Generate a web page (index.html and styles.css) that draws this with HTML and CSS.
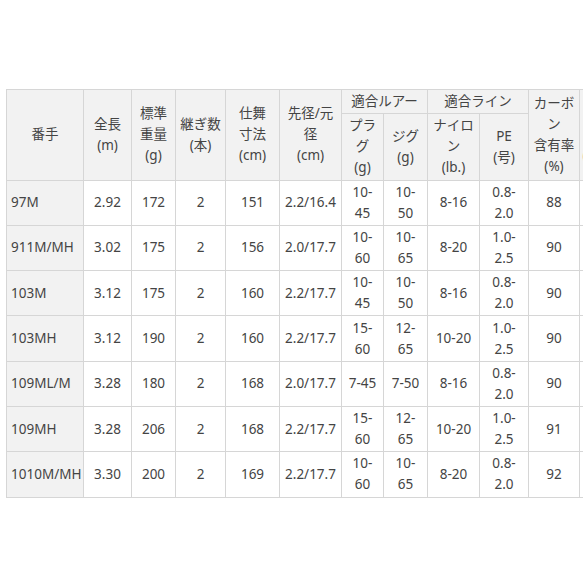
FILE: index.html
```html
<!DOCTYPE html>
<html lang="ja">
<head>
<meta charset="utf-8">
<title>スペック</title>
<link rel="stylesheet" href="styles.css">
</head>
<body>
<div class="wrap">
<table class="spec">
  <colgroup>
    <col class="c-name"><col class="c-len"><col class="c-wt"><col class="c-pc"><col class="c-close"><col class="c-dia">
    <col class="c-plug"><col class="c-jig"><col class="c-nylon"><col class="c-pe"><col class="c-carbon"><col class="c-price">
  </colgroup>
  <thead>
    <tr>
      <th rowspan="2">番手</th>
      <th rowspan="2">全長<br>(m)</th>
      <th rowspan="2">標準<br>重量<br>(g)</th>
      <th rowspan="2">継ぎ数<br>(本)</th>
      <th rowspan="2">仕舞<br>寸法<br>(cm)</th>
      <th rowspan="2">先径/元<br>径<br>(cm)</th>
      <th colspan="2">適合ルアー</th>
      <th colspan="2">適合ライン</th>
      <th rowspan="2">カーボ<br>ン<br>含有率<br>(%)</th>
      <th rowspan="2">本体<br>価格<br>(円・税抜)</th>
    </tr>
    <tr>
      <th>プラ<br>グ<br>(g)</th>
      <th>ジグ<br>(g)</th>
      <th>ナイロ<br>ン<br>(lb.)</th>
      <th>PE<br>(号)</th>
    </tr>
  </thead>
  <tbody>
    <tr><td class="name">97M</td><td>2.92</td><td>172</td><td>2</td><td>151</td><td>2.2/16.4</td><td>10-<br>45</td><td>10-<br>50</td><td>8-16</td><td>0.8-<br>2.0</td><td>88</td><td></td></tr>
    <tr><td class="name">911M/MH</td><td>3.02</td><td>175</td><td>2</td><td>156</td><td>2.0/17.7</td><td>10-<br>60</td><td>10-<br>65</td><td>8-20</td><td>1.0-<br>2.5</td><td>90</td><td></td></tr>
    <tr><td class="name">103M</td><td>3.12</td><td>175</td><td>2</td><td>160</td><td>2.2/17.7</td><td>10-<br>45</td><td>10-<br>50</td><td>8-16</td><td>0.8-<br>2.0</td><td>90</td><td></td></tr>
    <tr><td class="name">103MH</td><td>3.12</td><td>190</td><td>2</td><td>160</td><td>2.2/17.7</td><td>15-<br>60</td><td>12-<br>65</td><td>10-20</td><td>1.0-<br>2.5</td><td>90</td><td></td></tr>
    <tr><td class="name">109ML/M</td><td>3.28</td><td>180</td><td>2</td><td>168</td><td>2.0/17.7</td><td>7-45</td><td>7-50</td><td>8-16</td><td>0.8-<br>2.0</td><td>90</td><td></td></tr>
    <tr><td class="name">109MH</td><td>3.28</td><td>206</td><td>2</td><td>168</td><td>2.2/17.7</td><td>15-<br>60</td><td>12-<br>65</td><td>10-20</td><td>1.0-<br>2.5</td><td>91</td><td></td></tr>
    <tr><td class="name">1010M/MH</td><td>3.30</td><td>200</td><td>2</td><td>169</td><td>2.2/17.7</td><td>10-<br>60</td><td>10-<br>65</td><td>8-20</td><td>0.8-<br>2.0</td><td>92</td><td></td></tr>
  </tbody>
</table>
</div>
</body>
</html>
```
FILE: styles.css
```css
html, body {
  margin: 0;
  overflow: hidden;
  background: #fff;
}
body {
  font-family: "Noto Sans", "Noto Sans CJK JP", sans-serif;
  font-size: 13.5px;
  color: #444;
}
.wrap {
  padding: 89px 0 0 6px;
}
.spec {
  border-collapse: collapse;
  table-layout: fixed;
  width: 641px;
}
.c-name { width: 77px; }
.c-len { width: 48px; }
.c-wt { width: 44px; }
.c-pc { width: 50px; }
.c-close { width: 54px; }
.c-dia { width: 62px; }
.c-plug { width: 42px; }
.c-jig { width: 44px; }
.c-nylon { width: 52px; }
.c-pe { width: 49px; }
.c-carbon { width: 51px; }
.c-price { width: 68px; }
.spec th,
.spec td {
  border: 1px solid #d6d6d6;
  padding: 1.15px 2px;
  line-height: 21px;
  text-align: center;
  vertical-align: middle;
  font-weight: normal;
  white-space: nowrap;
  overflow: hidden;
}
.spec th {
  background: #f2f2f2;
}
.spec td.name {
  background: #f2f2f2;
  text-align: left;
  padding-left: 4px;
}
```
